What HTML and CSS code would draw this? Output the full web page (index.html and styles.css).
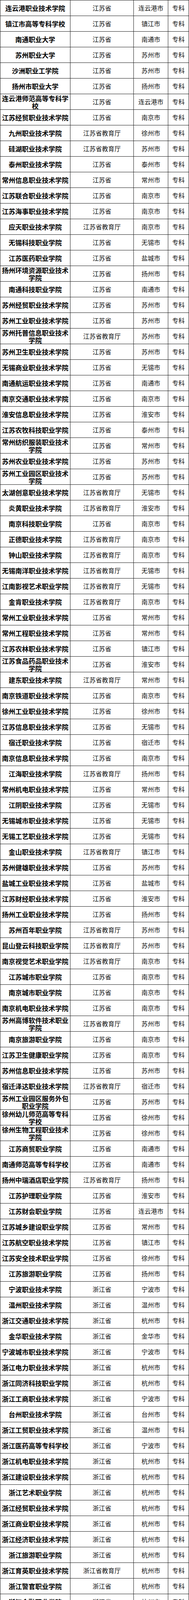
FILE: index.html
```html
<!DOCTYPE html>
<html lang="zh-CN">
<head>
<meta charset="utf-8">
<meta name="viewport" content="width=device-width, initial-scale=1">
<title>高职院校名单</title>
<link rel="stylesheet" href="styles.css">
</head>
<body>
<div class="tbl">
<div class="r"><div class="n">连云港职业技术学院</div><div>江苏省</div><div>连云港市</div><div>专科</div></div>
<div class="r"><div class="n">镇江市高等专科学校</div><div>江苏省</div><div>镇江市</div><div>专科</div></div>
<div class="r"><div class="n">南通职业大学</div><div>江苏省</div><div>南通市</div><div>专科</div></div>
<div class="r"><div class="n">苏州职业大学</div><div>江苏省</div><div>苏州市</div><div>专科</div></div>
<div class="r"><div class="n">沙洲职业工学院</div><div>江苏省</div><div>苏州市</div><div>专科</div></div>
<div class="r"><div class="n">扬州市职业大学</div><div>江苏省</div><div>扬州市</div><div>专科</div></div>
<div class="r"><div class="n">连云港师范高等专科学校</div><div>江苏省</div><div>连云港市</div><div>专科</div></div>
<div class="r"><div class="n">江苏经贸职业技术学院</div><div>江苏省</div><div>南京市</div><div>专科</div></div>
<div class="r"><div class="n">九州职业技术学院</div><div>江苏省教育厅</div><div>徐州市</div><div>专科</div></div>
<div class="r"><div class="n">硅湖职业技术学院</div><div>江苏省教育厅</div><div>苏州市</div><div>专科</div></div>
<div class="r"><div class="n">泰州职业技术学院</div><div>江苏省</div><div>泰州市</div><div>专科</div></div>
<div class="r"><div class="n">常州信息职业技术学院</div><div>江苏省</div><div>常州市</div><div>专科</div></div>
<div class="r"><div class="n">江苏联合职业技术学院</div><div>江苏省</div><div>南京市</div><div>专科</div></div>
<div class="r"><div class="n">江苏海事职业技术学院</div><div>江苏省</div><div>南京市</div><div>专科</div></div>
<div class="r"><div class="n">应天职业技术学院</div><div>江苏省教育厅</div><div>南京市</div><div>专科</div></div>
<div class="r"><div class="n">无锡科技职业学院</div><div>江苏省</div><div>无锡市</div><div>专科</div></div>
<div class="r"><div class="n">江苏医药职业学院</div><div>江苏省</div><div>盐城市</div><div>专科</div></div>
<div class="r"><div class="n">扬州环境资源职业技术学院</div><div>江苏省</div><div>扬州市</div><div>专科</div></div>
<div class="r"><div class="n">南通科技职业学院</div><div>江苏省</div><div>南通市</div><div>专科</div></div>
<div class="r"><div class="n">苏州经贸职业技术学院</div><div>江苏省</div><div>苏州市</div><div>专科</div></div>
<div class="r"><div class="n">苏州工业职业技术学院</div><div>江苏省</div><div>苏州市</div><div>专科</div></div>
<div class="r"><div class="n">苏州托普信息职业技术学院</div><div>江苏省教育厅</div><div>苏州市</div><div>专科</div></div>
<div class="r"><div class="n">苏州卫生职业技术学院</div><div>江苏省</div><div>苏州市</div><div>专科</div></div>
<div class="r"><div class="n">无锡商业职业技术学院</div><div>江苏省</div><div>无锡市</div><div>专科</div></div>
<div class="r"><div class="n">南通航运职业技术学院</div><div>江苏省</div><div>南通市</div><div>专科</div></div>
<div class="r"><div class="n">南京交通职业技术学院</div><div>江苏省</div><div>南京市</div><div>专科</div></div>
<div class="r"><div class="n">淮安信息职业技术学院</div><div>江苏省</div><div>淮安市</div><div>专科</div></div>
<div class="r"><div class="n">江苏农牧科技职业学院</div><div>江苏省</div><div>泰州市</div><div>专科</div></div>
<div class="r"><div class="n">常州纺织服装职业技术学院</div><div>江苏省</div><div>常州市</div><div>专科</div></div>
<div class="r"><div class="n">苏州农业职业技术学院</div><div>江苏省</div><div>苏州市</div><div>专科</div></div>
<div class="r"><div class="n">苏州工业园区职业技术学院</div><div>江苏省</div><div>苏州市</div><div>专科</div></div>
<div class="r"><div class="n">太湖创意职业技术学院</div><div>江苏省教育厅</div><div>无锡市</div><div>专科</div></div>
<div class="r"><div class="n">炎黄职业技术学院</div><div>江苏省教育厅</div><div>淮安市</div><div>专科</div></div>
<div class="r"><div class="n">南京科技职业学院</div><div>江苏省</div><div>南京市</div><div>专科</div></div>
<div class="r"><div class="n">正德职业技术学院</div><div>江苏省教育厅</div><div>南京市</div><div>专科</div></div>
<div class="r"><div class="n">钟山职业技术学院</div><div>江苏省教育厅</div><div>南京市</div><div>专科</div></div>
<div class="r"><div class="n">无锡南洋职业技术学院</div><div>江苏省教育厅</div><div>无锡市</div><div>专科</div></div>
<div class="r"><div class="n">江南影视艺术职业学院</div><div>江苏省教育厅</div><div>无锡市</div><div>专科</div></div>
<div class="r"><div class="n">金肯职业技术学院</div><div>江苏省教育厅</div><div>南京市</div><div>专科</div></div>
<div class="r"><div class="n">常州工业职业技术学院</div><div>江苏省</div><div>常州市</div><div>专科</div></div>
<div class="r"><div class="n">常州工程职业技术学院</div><div>江苏省</div><div>常州市</div><div>专科</div></div>
<div class="r"><div class="n">江苏农林职业技术学院</div><div>江苏省</div><div>镇江市</div><div>专科</div></div>
<div class="r"><div class="n">江苏食品药品职业技术学院</div><div>江苏省</div><div>淮安市</div><div>专科</div></div>
<div class="r"><div class="n">建东职业技术学院</div><div>江苏省教育厅</div><div>常州市</div><div>专科</div></div>
<div class="r"><div class="n">南京铁道职业技术学院</div><div>江苏省</div><div>南京市</div><div>专科</div></div>
<div class="r"><div class="n">徐州工业职业技术学院</div><div>江苏省</div><div>徐州市</div><div>专科</div></div>
<div class="r"><div class="n">江苏信息职业技术学院</div><div>江苏省</div><div>无锡市</div><div>专科</div></div>
<div class="r"><div class="n">宿迁职业技术学院</div><div>江苏省</div><div>宿迁市</div><div>专科</div></div>
<div class="r"><div class="n">南京信息职业技术学院</div><div>江苏省</div><div>南京市</div><div>专科</div></div>
<div class="r"><div class="n">江海职业技术学院</div><div>江苏省教育厅</div><div>扬州市</div><div>专科</div></div>
<div class="r"><div class="n">常州机电职业技术学院</div><div>江苏省</div><div>常州市</div><div>专科</div></div>
<div class="r"><div class="n">江阴职业技术学院</div><div>江苏省</div><div>无锡市</div><div>专科</div></div>
<div class="r"><div class="n">无锡城市职业技术学院</div><div>江苏省</div><div>无锡市</div><div>专科</div></div>
<div class="r"><div class="n">无锡工艺职业技术学院</div><div>江苏省</div><div>无锡市</div><div>专科</div></div>
<div class="r"><div class="n">金山职业技术学院</div><div>江苏省教育厅</div><div>镇江市</div><div>专科</div></div>
<div class="r"><div class="n">苏州健雄职业技术学院</div><div>江苏省</div><div>苏州市</div><div>专科</div></div>
<div class="r"><div class="n">盐城工业职业技术学院</div><div>江苏省</div><div>盐城市</div><div>专科</div></div>
<div class="r"><div class="n">江苏财经职业技术学院</div><div>江苏省</div><div>淮安市</div><div>专科</div></div>
<div class="r"><div class="n">扬州工业职业技术学院</div><div>江苏省</div><div>扬州市</div><div>专科</div></div>
<div class="r"><div class="n">苏州百年职业学院</div><div>江苏省教育厅</div><div>苏州市</div><div>专科</div></div>
<div class="r"><div class="n">昆山登云科技职业学院</div><div>江苏省教育厅</div><div>苏州市</div><div>专科</div></div>
<div class="r"><div class="n">南京视觉艺术职业学院</div><div>江苏省教育厅</div><div>南京市</div><div>专科</div></div>
<div class="r"><div class="n">江苏城市职业学院</div><div>江苏省</div><div>南京市</div><div>专科</div></div>
<div class="r"><div class="n">南京城市职业学院</div><div>江苏省</div><div>南京市</div><div>专科</div></div>
<div class="r"><div class="n">南京机电职业技术学院</div><div>江苏省</div><div>南京市</div><div>专科</div></div>
<div class="r"><div class="n">苏州高博软件技术职业学院</div><div>江苏省教育厅</div><div>苏州市</div><div>专科</div></div>
<div class="r"><div class="n">南京旅游职业学院</div><div>江苏省</div><div>南京市</div><div>专科</div></div>
<div class="r"><div class="n">江苏卫生健康职业学院</div><div>江苏省</div><div>南京市</div><div>专科</div></div>
<div class="r"><div class="n">苏州信息职业技术学院</div><div>江苏省</div><div>苏州市</div><div>专科</div></div>
<div class="r"><div class="n">宿迁泽达职业技术学院</div><div>江苏省教育厅</div><div>宿迁市</div><div>专科</div></div>
<div class="r"><div class="n">苏州工业园区服务外包职业学院</div><div>江苏省</div><div>苏州市</div><div>专科</div></div>
<div class="r"><div class="n">徐州幼儿师范高等专科学校</div><div>江苏省</div><div>徐州市</div><div>专科</div></div>
<div class="r"><div class="n">徐州生物工程职业技术学院</div><div>江苏省</div><div>徐州市</div><div>专科</div></div>
<div class="r"><div class="n">江苏商贸职业学院</div><div>江苏省</div><div>南通市</div><div>专科</div></div>
<div class="r"><div class="n">南通师范高等专科学校</div><div>江苏省</div><div>南通市</div><div>专科</div></div>
<div class="r"><div class="n">扬州中瑞酒店职业学院</div><div>江苏省教育厅</div><div>扬州市</div><div>专科</div></div>
<div class="r"><div class="n">江苏护理职业学院</div><div>江苏省</div><div>淮安市</div><div>专科</div></div>
<div class="r"><div class="n">江苏财会职业学院</div><div>江苏省</div><div>连云港市</div><div>专科</div></div>
<div class="r"><div class="n">江苏城乡建设职业学院</div><div>江苏省</div><div>常州市</div><div>专科</div></div>
<div class="r"><div class="n">江苏航空职业技术学院</div><div>江苏省</div><div>镇江市</div><div>专科</div></div>
<div class="r"><div class="n">江苏安全技术职业学院</div><div>江苏省</div><div>徐州市</div><div>专科</div></div>
<div class="r"><div class="n">江苏旅游职业学院</div><div>江苏省</div><div>扬州市</div><div>专科</div></div>
<div class="r"><div class="n">宁波职业技术学院</div><div>浙江省</div><div>宁波市</div><div>专科</div></div>
<div class="r"><div class="n">温州职业技术学院</div><div>浙江省</div><div>温州市</div><div>专科</div></div>
<div class="r"><div class="n">浙江交通职业技术学院</div><div>浙江省</div><div>杭州市</div><div>专科</div></div>
<div class="r"><div class="n">金华职业技术学院</div><div>浙江省</div><div>金华市</div><div>专科</div></div>
<div class="r"><div class="n">宁波城市职业技术学院</div><div>浙江省</div><div>宁波市</div><div>专科</div></div>
<div class="r"><div class="n">浙江电力职业技术学院</div><div>浙江省</div><div>杭州市</div><div>专科</div></div>
<div class="r"><div class="n">浙江同济科技职业学院</div><div>浙江省</div><div>杭州市</div><div>专科</div></div>
<div class="r"><div class="n">浙江工商职业技术学院</div><div>浙江省</div><div>宁波市</div><div>专科</div></div>
<div class="r"><div class="n">台州职业技术学院</div><div>浙江省</div><div>台州市</div><div>专科</div></div>
<div class="r"><div class="n">浙江工贸职业技术学院</div><div>浙江省</div><div>温州市</div><div>专科</div></div>
<div class="r"><div class="n">浙江医药高等专科学校</div><div>浙江省</div><div>宁波市</div><div>专科</div></div>
<div class="r"><div class="n">浙江机电职业技术学院</div><div>浙江省</div><div>杭州市</div><div>专科</div></div>
<div class="r"><div class="n">浙江建设职业技术学院</div><div>浙江省</div><div>杭州市</div><div>专科</div></div>
<div class="r"><div class="n">浙江艺术职业学院</div><div>浙江省</div><div>杭州市</div><div>专科</div></div>
<div class="r"><div class="n">浙江经贸职业技术学院</div><div>浙江省</div><div>杭州市</div><div>专科</div></div>
<div class="r"><div class="n">浙江商业职业技术学院</div><div>浙江省</div><div>杭州市</div><div>专科</div></div>
<div class="r"><div class="n">浙江经济职业技术学院</div><div>浙江省</div><div>杭州市</div><div>专科</div></div>
<div class="r"><div class="n">浙江旅游职业学院</div><div>浙江省</div><div>杭州市</div><div>专科</div></div>
<div class="r"><div class="n">浙江育英职业技术学院</div><div>浙江省教育厅</div><div>杭州市</div><div>专科</div></div>
<div class="r"><div class="n">浙江警官职业学院</div><div>浙江省</div><div>杭州市</div><div>专科</div></div>
<div class="r"><div class="n">浙江金融职业学院</div><div>浙江省</div><div>杭州市</div><div>专科</div></div>
<div class="r"><div class="n">浙江工业职业技术学院</div><div>浙江省</div><div>绍兴市</div><div>专科</div></div>
<div class="r"><div class="n">杭州职业技术学院</div><div>浙江省</div><div>杭州市</div><div>专科</div></div>
<div class="r"><div class="n">嘉兴职业技术学院</div><div>浙江省</div><div>嘉兴市</div><div>专科</div></div>
<div class="r"><div class="n">湖州职业技术学院</div><div>浙江省</div><div>湖州市</div><div>专科</div></div>
<div class="r"><div class="n">绍兴职业技术学院</div><div>浙江省教育厅</div><div>绍兴市</div><div>专科</div></div>
<div class="r"><div class="n">衢州职业技术学院</div><div>浙江省</div><div>衢州市</div><div>专科</div></div>
<div class="r"><div class="n">丽水职业技术学院</div><div>浙江省</div><div>丽水市</div><div>专科</div></div>
<div class="r"><div class="n">浙江东方职业技术学院</div><div>浙江省教育厅</div><div>温州市</div><div>专科</div></div>
<div class="r"><div class="n">义乌工商职业技术学院</div><div>浙江省</div><div>金华市</div><div>专科</div></div>
<div class="r"><div class="n">浙江纺织服装职业技术学院</div><div>浙江省</div><div>宁波市</div><div>专科</div></div>
<div class="r"><div class="n">杭州科技职业技术学院</div><div>浙江省</div><div>杭州市</div><div>专科</div></div>
<div class="r"><div class="n">浙江长征职业技术学院</div><div>浙江省教育厅</div><div>杭州市</div><div>专科</div></div>
<div class="r"><div class="n">嘉兴南洋职业技术学院</div><div>浙江省教育厅</div><div>嘉兴市</div><div>专科</div></div>
<div class="r"><div class="n">浙江广厦建设职业技术学院</div><div>浙江省教育厅</div><div>金华市</div><div>专科</div></div>
<div class="r"><div class="n">杭州万向职业技术学院</div><div>浙江省教育厅</div><div>杭州市</div><div>专科</div></div>
<div class="r"><div class="n">浙江邮电职业技术学院</div><div>浙江省</div><div>绍兴市</div><div>专科</div></div>
<div class="r"><div class="n">宁波卫生职业技术学院</div><div>浙江省</div><div>宁波市</div><div>专科</div></div>
<div class="r"><div class="n">台州科技职业学院</div><div>浙江省</div><div>台州市</div><div>专科</div></div>
<div class="r"><div class="n">浙江国际海运职业技术学院</div><div>浙江省</div><div>舟山市</div><div>专科</div></div>
<div class="r"><div class="n">浙江体育职业技术学院</div><div>浙江省</div><div>杭州市</div><div>专科</div></div>
<div class="r"><div class="n">温州科技职业学院</div><div>浙江省</div><div>温州市</div><div>专科</div></div>
<div class="r"><div class="n">浙江汽车职业技术学院</div><div>浙江省教育厅</div><div>台州市</div><div>专科</div></div>
<div class="r"><div class="n">浙江横店影视职业学院</div><div>浙江省教育厅</div><div>金华市</div><div>专科</div></div>
<div class="r"><div class="n">浙江农业商贸职业学院</div><div>浙江省</div><div>绍兴市</div><div>专科</div></div>
<div class="r"><div class="n">浙江特殊教育职业学院</div><div>浙江省</div><div>杭州市</div><div>专科</div></div>
<div class="r"><div class="n">浙江安防职业技术学院</div><div>浙江省</div><div>温州市</div><div>专科</div></div>
<div class="r"><div class="n">浙江舟山群岛新区旅游与健康职业学院</div><div>浙江省</div><div>舟山市</div><div>专科</div></div>
<div class="r"><div class="n">宁波幼儿师范高等专科学校</div><div>浙江省</div><div>宁波市</div><div>专科</div></div>
<div class="r"><div class="n">安徽职业技术学院</div><div>安徽省</div><div>合肥市</div><div>专科</div></div>
</div>
</body>
</html>
```
FILE: styles.css
```css
html, body {
  margin: 0;
  padding: 0;
  background: #fff;
}

.tbl {
  width: 482px;
  border-left: 1px solid #1a1a1a;
  border-top: 1px solid #1a1a1a;
  font-family: "Noto Sans CJK SC", sans-serif;
  color: #111;
}

.r {
  display: grid;
  grid-template-columns: 179px 162px 88px 53px;
  height: 40px;
}

.r > div {
  box-sizing: border-box;
  height: 40px;
  border-right: 1px solid #1a1a1a;
  border-bottom: 1px solid #1a1a1a;
  display: flex;
  align-items: center;
  justify-content: center;
  text-align: center;
  font-size: 16px;
  line-height: 19px;
  padding: 0 2px;
}

.r > .n {
  font-size: 17px;
  font-weight: 700;
  line-height: 19px;
  color: #000;
}
```
